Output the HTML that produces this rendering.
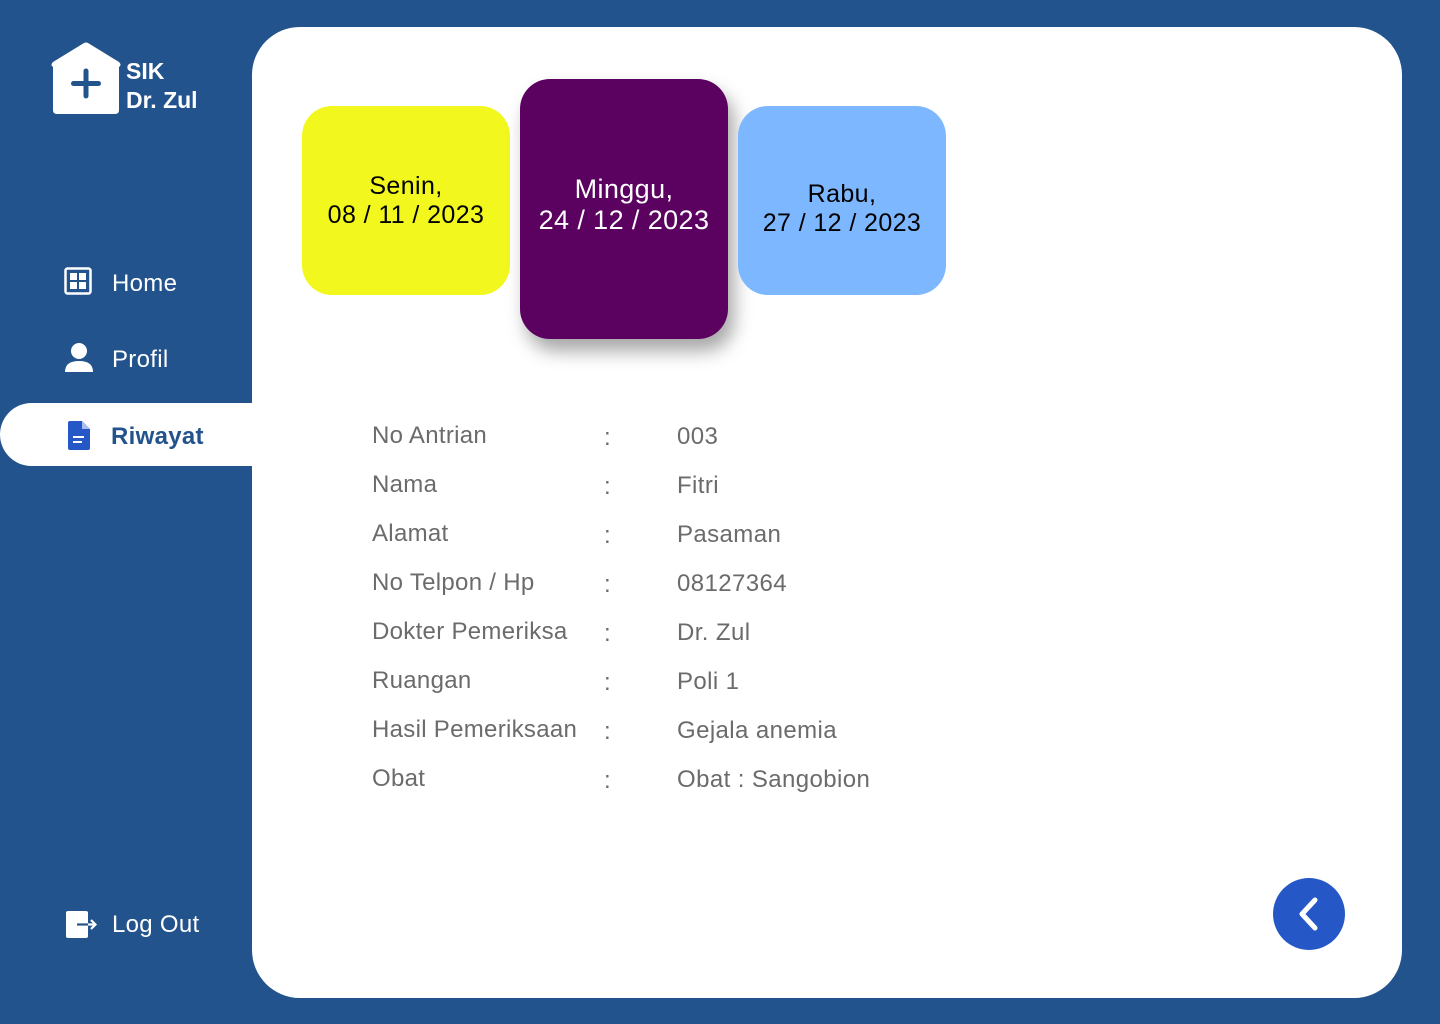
<!DOCTYPE html>
<html><head><meta charset="utf-8"><style>
*{margin:0;padding:0;box-sizing:border-box}
body{width:1440px;height:1024px;background:#22538c;position:relative;overflow:hidden;font-family:"Liberation Sans",sans-serif}
.abs{position:absolute}
.panel{left:252px;top:27px;width:1150px;height:971px;background:#fff;border-radius:48px}
.nav{color:#fff;font-size:24px;letter-spacing:.3px}
.card{border-radius:30px;display:flex;align-items:center;justify-content:center;text-align:center;font-size:25px;line-height:29px;letter-spacing:.4px}
</style></head><body>
<div class="abs panel"></div>
<svg class="abs" style="left:48px;top:40px" width="76" height="76" viewBox="0 0 76 76">
<path d="M5 27 Q2 25 5 22 L36 3 Q38 2 40 3 L71 22 Q74 25 71 27 L71 70 Q71 74 67 74 L9 74 Q5 74 5 70 Z" fill="#fff"/>
<path d="M38 31 V56 M25.5 43.5 H50.5" stroke="#22538c" stroke-width="5" stroke-linecap="round"/>
</svg>
<div class="abs" style="left:126px;top:57px;color:#fff;font-weight:bold;font-size:23px;line-height:29px">SIK<br>Dr. Zul</div>

<svg class="abs" style="left:64px;top:267px" width="28" height="28" viewBox="0 0 28 28"><rect x="1.5" y="1.5" width="25" height="25" rx="2" fill="none" stroke="#fff" stroke-width="2.5"/><rect x="6" y="6" width="7" height="7" fill="#fff"/><rect x="15" y="6" width="7" height="7" fill="#fff"/><rect x="6" y="15" width="7" height="7" fill="#fff"/><rect x="15" y="15" width="7" height="7" fill="#fff"/></svg>
<div class="abs nav" style="left:112px;top:270px">Home</div>
<svg class="abs" style="left:64px;top:342px" width="30" height="30" viewBox="0 0 30 30"><circle cx="15" cy="9" r="8" fill="#fff"/><path d="M1 30 Q1 19 15 19 Q29 19 29 30 Z" fill="#fff"/></svg>
<div class="abs nav" style="left:112px;top:346px">Profil</div>

<div class="abs" style="left:0;top:403px;width:262px;height:63px;background:#fff;border-radius:32px 0 0 32px"></div>
<svg class="abs" style="left:68px;top:421px" width="22" height="29" viewBox="0 0 22 29"><path d="M2 0 H14 L22 8 V27 Q22 29 20 29 H2 Q0 29 0 27 V2 Q0 0 2 0 Z" fill="#2557c6"/><path d="M14 0 V8 H22" fill="#a8bdf0"/><path d="M5 16 H16 M5 21 H14" stroke="#fff" stroke-width="2"/></svg>
<div class="abs" style="left:111px;top:423px;color:#22538c;font-size:24px;font-weight:bold;letter-spacing:.3px">Riwayat</div>

<svg class="abs" style="left:65px;top:910px" width="34" height="30" viewBox="0 0 34 30"><rect x="1" y="1" width="22" height="27" rx="2" fill="#fff"/><path d="M12 14.5 H30 M26 10 L30.5 14.5 L26 19" stroke="#fff" stroke-width="2.2" fill="none"/><path d="M12 14.5 H23" stroke="#22538c" stroke-width="2.2"/></svg>
<div class="abs nav" style="left:112px;top:911px">Log Out</div>

<div class="abs card" style="left:302px;top:106px;width:208px;height:189px;background:#f2f81e;color:#000">Senin,<br>08 / 11 / 2023</div>
<div class="abs card" style="left:520px;top:79px;width:208px;height:260px;background:#5b0260;color:#fff;font-size:27px;line-height:31px;padding-bottom:8px;box-shadow:6px 12px 18px rgba(0,0,0,.35)">Minggu,<br>24 / 12 / 2023</div>
<div class="abs card" style="left:738px;top:106px;width:208px;height:189px;background:#7db7ff;color:#000;padding-top:17px">Rabu,<br>27 / 12 / 2023</div>

<div class="abs" style="left:372px;top:411px;line-height:49px;color:#6b6b6b;font-size:24px;letter-spacing:.3px">No Antrian<br>Nama<br>Alamat<br>No Telpon / Hp<br>Dokter Pemeriksa<br>Ruangan<br>Hasil Pemeriksaan<br>Obat</div>
<div class="abs" style="left:604px;top:413px;line-height:49px;color:#6b6b6b;font-size:24px">:<br>:<br>:<br>:<br>:<br>:<br>:<br>:</div>
<div class="abs" style="left:677px;top:412px;line-height:49px;color:#6b6b6b;font-size:24px;letter-spacing:.4px">003<br>Fitri<br>Pasaman<br>08127364<br>Dr. Zul<br>Poli 1<br>Gejala anemia<br>Obat : Sangobion</div>

<svg class="abs" style="left:1273px;top:878px" width="72" height="72" viewBox="0 0 72 72"><circle cx="36" cy="36" r="36" fill="#2557c6"/><path d="M42 22 L29 36 L42 50" stroke="#fff" stroke-width="5" fill="none" stroke-linecap="round" stroke-linejoin="round"/></svg>
</body></html>
